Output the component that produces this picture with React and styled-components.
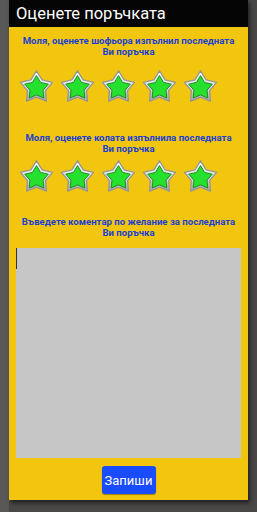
import React from 'react';
import styled, { createGlobalStyle } from 'styled-components';

const GlobalStyle = createGlobalStyle`
  html, body {
    margin: 0;
    padding: 0;
    background: #4d4b4a;
  }
  body {
    font-family: Roboto, "Liberation Sans", sans-serif;
  }
`

const Screen = styled.div`
  width: 257px;
  height: 512px;
  overflow: hidden;
  background: linear-gradient(90deg, #5a5857 0px, #5a5857 9px, #4a4847 9px, #4a4847 100%);
  padding-left: 9px;
  box-sizing: border-box;
`

const Dialog = styled.div`
  width: 239px;
  height: 500px;
  display: flex;
  flex-direction: column;
  box-shadow: 2px 3px 4px rgba(0, 0, 0, 0.55);
`

const TitleBar = styled.div`
  height: 29px;
  background: #050505;
  color: #ffffff;
  font-size: 16.5px;
  line-height: 27px;
  padding-left: 7px;
  white-space: nowrap;
`

const Body = styled.div`
  flex: 1;
  background: #f2c60f;
  display: flex;
  flex-direction: column;
  align-items: center;
  padding: 8px 7px 6px;
`

const Label = styled.div`
  color: #1b3fd2;
  font-weight: 700;
  font-size: 9.6px;
  line-height: 11px;
  text-align: center;
  width: 100%;
  margin-top: ${(p) => p.$top || 0}px;
`

const StarRow = styled.div`
  display: flex;
  gap: 4px;
  align-self: flex-start;
  padding-left: 2px;
  margin-top: ${(p) => p.$top || 0}px;
`

const Comment = styled.textarea`
  width: 225px;
  height: 210px;
  margin-top: 10px;
  background: #c6c6c6;
  border: none;
  border-left: 1px solid #3a3a3a;
  border-image: linear-gradient(#333 0, #333 22px, #c6c6c6 22px) 1;
  outline: none;
  resize: none;
  box-sizing: border-box;
  padding: 0;
  font-family: Roboto, "Liberation Sans", sans-serif;
`

const SaveButton = styled.button`
  margin-top: 8px;
  width: 54px;
  height: 28px;
  background: #1a4cff;
  color: #ffffff;
  border: none;
  border-radius: 3px;
  box-shadow: 0 1px 1px rgba(0, 0, 0, 0.35);
  font-family: Roboto, "Liberation Sans", sans-serif;
  font-size: 13px;
  padding: 0;
`

const starPoints = (cx, cy, R, r) => {
  const pts = []
  for (let i = 0; i < 10; i++) {
    const rad = i % 2 === 0 ? R : r
    const a = -Math.PI / 2 + (i * Math.PI) / 5
    pts.push(`${(cx + rad * Math.cos(a)).toFixed(2)},${(cy + rad * Math.sin(a)).toFixed(2)}`)
  }
  return pts.join(' ')
}

const Star = ({ id }) => (
  <svg width="37" height="36" viewBox="0 0 37 36">
    <defs>
      <linearGradient id={`silver${id}`} x1="0" y1="0" x2="0" y2="1">
        <stop offset="0" stopColor="#ffffff" />
        <stop offset="0.5" stopColor="#e2e2e2" />
        <stop offset="1" stopColor="#a6a6a6" />
      </linearGradient>
    </defs>
    <polygon
      points={starPoints(18.5, 19.6, 16.8, 9.6)}
      fill={`url(#silver${id})`}
      stroke="#959595"
      strokeWidth="1.3"
      strokeLinejoin="round"
    />
    <polygon
      points={starPoints(18.5, 20, 12.4, 6.9)}
      fill="#25e02c"
      stroke="#1f8f23"
      strokeWidth="1"
      strokeLinejoin="round"
    />
  </svg>
)

const Stars = ({ top, prefix }) => (
  <StarRow $top={top}>
    {[0, 1, 2, 3, 4].map((i) => (
      <Star key={i} id={`${prefix}${i}`} />
    ))}
  </StarRow>
)

const App = () => (
  <Screen>
    <GlobalStyle />
    <Dialog>
      <TitleBar>Оценете поръчката</TitleBar>
      <Body>
        <Label>
          Моля, оценете шофьора изпълнил последната
          <br />
          Ви поръчка
        </Label>
        <Stars top={11} prefix="a" />
        <Label $top={28}>
          Моля, оценете колата изпълнила последната
          <br />
          Ви поръчка
        </Label>
        <Stars top={4} prefix="b" />
        <Label $top={22}>
          Въведете коментар по желание за последната
          <br />
          Ви поръчка
        </Label>
        <Comment />
        <SaveButton>Запиши</SaveButton>
      </Body>
    </Dialog>
  </Screen>
)

export default App;
